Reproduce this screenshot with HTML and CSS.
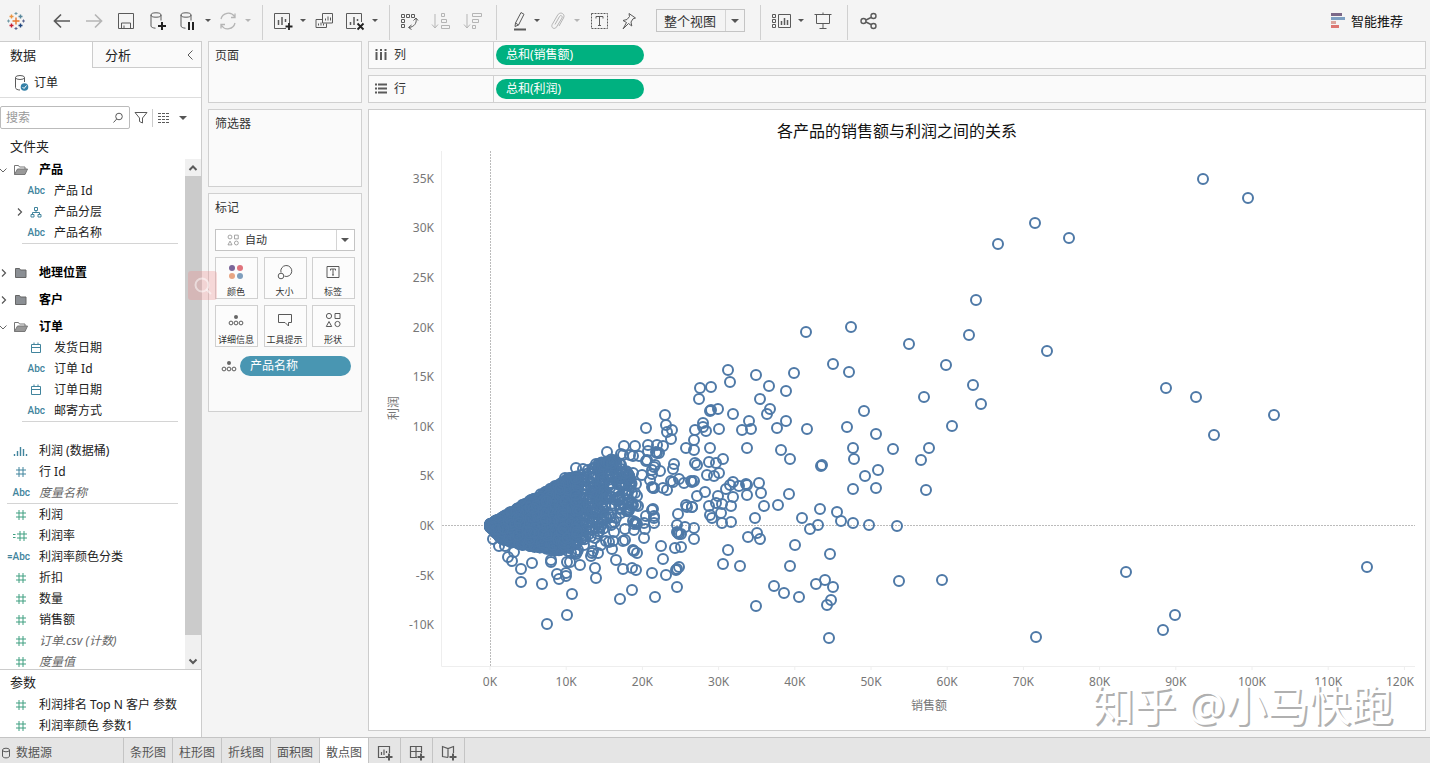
FILE: index.html
```html
<!DOCTYPE html>
<html lang="zh-CN">
<head>
<meta charset="utf-8">
<title>各产品的销售额与利润之间的关系</title>
<link rel="stylesheet" href="styles.css">
</head>
<body>
<svg class="symbols" aria-hidden="true">
  <symbol id="hash" viewBox="0 0 16 16"><path d="M6 3v10M10 3v10M3 6h10M3 10h10"/></symbol>
  <symbol id="calc-hash" viewBox="0 0 16 16"><path d="M7 3v10M11 3v10M4 6h10M4 10h10M0 6.500h2.500M0 9.500h2.500"/></symbol>
  <symbol id="date" viewBox="0 0 16 16"><path d="M3.500 4.500h9v8h-9zM3.500 7.500h9M6 2.500v2M10 2.500v2"/></symbol>
  <symbol id="tree" viewBox="0 0 16 16"><path d="M6.500 3.500h3v3h-3zM3 10.500h3v2.500H3zM10 10.500h3v2.500h-3zM8 6.500v2M4.500 10.500v-2h7v2"/></symbol>
  <symbol id="bins" viewBox="0 0 16 16"><path d="M1.500 11v2M4.500 8v5M7.500 4v9M10.500 6v7M13.500 11v2" stroke-width="1.400"/></symbol>
  <symbol id="folder" viewBox="0 0 16 16"><path d="M2.500 12.500v-9h4l1 1.500h5.500v7.500z" fill="#8b8f94" stroke="#666"/></symbol>
  <symbol id="folder-open" viewBox="0 0 16 16"><path d="M1.500 12.500v-9h4l1 1.500h5.500v2" fill="none" stroke="#777"/><path d="M1.500 12.500l3-5.500h10l-2.500 5.500z" fill="#999" stroke="#777"/></symbol>
  <symbol id="down" viewBox="0 0 10 10"><path d="M1.500 3.500L5 7l3.500-3.500" stroke="#666" fill="none"/></symbol>
  <symbol id="right" viewBox="0 0 10 10"><path d="M4 1.500L7.500 5L4 8.500" stroke="#555" stroke-width="1.200" fill="none"/></symbol>
  <symbol id="detail" viewBox="0 0 16 16"><circle cx="8" cy="5" r="2" fill="#666" stroke="none"/><circle cx="3" cy="11" r="1.900"/><circle cx="8" cy="11" r="1.900"/><circle cx="13" cy="11" r="1.900"/></symbol>
  <symbol id="shapes" viewBox="0 0 16 16"><circle cx="4" cy="4" r="2.600"/><path d="M10 1.500h5v5h-5zM4 9.500l2.700 5H1.300z"/><circle cx="12.500" cy="12" r="2.600"/></symbol>
</svg>

<header class="toolbar">
  <button class="tool first" aria-label="开始"><svg class="ico" viewBox="0 0 20 20"><g fill="none" stroke-width="1.400"><path d="M10 6.500v7M6.500 10h7" stroke="#e8762d"/><path d="M5.500 3.500v4M3.500 5.500h4" stroke="#eb9440"/><path d="M14.500 3.500v4M12.500 5.500h4" stroke="#59879b"/><path d="M5.500 12.500v4M3.500 14.500h4" stroke="#c72035"/><path d="M14.500 12.500v4M12.500 14.500h4" stroke="#1f457e"/></g><g fill="none"><path d="M10 1v3M8.500 2.500h3M1 10h3M2.500 8.500v3" stroke="#7199a6"/><path d="M10 16v3M8.500 17.500h3M16 10h3M17.500 8.500v3" stroke="#5b6591"/></g></svg></button>
  <span class="sep"></span>
  <button class="tool" aria-label="撤消"><svg class="ico" viewBox="0 0 20 20"><path d="M18 10H3M9 3.500L2.500 10L9 16.500" stroke-width="1.700"/></svg></button>
  <button class="tool off" aria-label="重做"><svg class="ico" viewBox="0 0 20 20"><path d="M2 10h15M11 3.500L17.500 10L11 16.500" stroke-width="1.700"/></svg></button>
  <button class="tool" aria-label="保存"><svg class="ico" viewBox="0 0 20 20"><path d="M2.500 2.500h15v15h-15zM5.500 17v-5h9v5M8 17v-2.500"/></svg></button>
  <button class="tool" aria-label="新建数据源"><svg class="ico" viewBox="0 0 20 20"><ellipse cx="8" cy="4" rx="5" ry="2.200"/><path d="M3 4v11c0 1.200 2 2 4.500 2.200M13 4v5.500"/><path d="M14 11v8M10 15h8" stroke="#222" stroke-width="2"/></svg></button>
  <button class="tool menu" aria-label="暂停自动更新"><svg class="ico" viewBox="0 0 20 20"><ellipse cx="8" cy="4" rx="5" ry="2.200"/><path d="M3 4v11c0 1.200 2 2 4.500 2.200M13 4v5.500"/><path d="M11 11v8M15 11v8" stroke="#222" stroke-width="2"/></svg></button>
  <button class="caret" aria-label="更新选项"></button>
  <button class="tool menu off" aria-label="运行更新"><svg class="ico" viewBox="0 0 20 20"><path d="M3 8a7.500 7.500 0 0 1 13.500-2.500M17 12a7.500 7.500 0 0 1-13.500 2.500M13 6.500h4v-4M7 13.500H3v4" stroke-width="1.300"/></svg></button>
  <button class="caret off" aria-label="运行选项"></button>
  <span class="sep"></span>
  <button class="tool menu" aria-label="新建工作表"><svg class="ico" viewBox="0 0 20 20"><path d="M13 17.500H1.500v-15h15V12"/><path d="M5.500 14V9M9 14V6M12.500 11V8" stroke-width="1.500"/><path d="M16 12v7M12.500 15.500h7" stroke="#222" stroke-width="1.800"/></svg></button>
  <button class="caret" aria-label="工作表选项"></button>
  <button class="tool" aria-label="复制"><svg class="ico" viewBox="0 0 20 20"><path d="M7.500 2.500h10v9.500h-10zM7 8.500H1v8h10.500v-4M10.500 9.500v-2M13 9.500v-4M15.500 9.500v-3M3.500 14.500v-2M6 14.500v-3M8.500 14.500v-2"/></svg></button>
  <button class="tool menu" aria-label="清除工作表"><svg class="ico" viewBox="0 0 20 20"><path d="M11 17.500H1.500v-15h15V11"/><path d="M5.500 14v-3M9 14V6M12.500 10V8" stroke-width="1.500"/><path d="M12.500 12.500l6 6M18.500 12.500l-6 6" stroke="#222" stroke-width="1.800"/></svg></button>
  <button class="caret" aria-label="清除选项"></button>
  <span class="sep"></span>
  <button class="tool menu" aria-label="交换行和列"><svg class="ico" viewBox="0 0 20 20"><path d="M1.500 3.500h3v3h-3zM6.500 3.500h3v3h-3zM11.500 3.500h3v3h-3zM1.500 8.500h3v3h-3zM1.500 13.500h3v3h-3zM16 8c1 4-2 8-7 8.500M13.500 9.500L16 7l2 2.500M11.500 14L8.500 16.500l3 2"/></svg></button>
  <button class="tool off" aria-label="升序排序"><svg class="ico" viewBox="0 0 20 20"><path d="M5 3v13M2 13.500L5 17l3-3.500M11.500 2.500h3v3h-3zM11.500 8.500h5v3h-5zM11.500 14.500h8v3h-8z"/></svg></button>
  <button class="tool off" aria-label="降序排序"><svg class="ico" viewBox="0 0 20 20"><path d="M5 3v13M2 13.500L5 17l3-3.500M10.500 2.500h9v3h-9zM10.500 8.500h6v3h-6zM10.500 14.500h3v3h-3z"/></svg></button>
  <span class="sep"></span>
  <button class="tool menu" aria-label="突出显示"><svg class="ico" viewBox="0 0 20 20"><path d="M8.500 12L14 1.500l3 1.800L11.500 14L8 15.500zM8.500 12l3 2"/><path d="M7 18.500h12" stroke-width="2"/></svg></button>
  <button class="caret" aria-label="突出显示选项"></button>
  <button class="tool menu off" aria-label="组成员"><svg class="ico" viewBox="0 0 20 20"><path d="M8 13.500l4.500-8c1-2 3.500-.5 2.500 1.500L9.500 16c-1.800 3-6 .8-4.300-2.500l5.500-9.500c2.500-4 8-1 5.800 3L12 15"/></svg></button>
  <button class="caret off" aria-label="组选项"></button>
  <button class="tool" aria-label="显示标记标签"><svg class="ico" viewBox="0 0 20 20"><path d="M2.500 2.500h16v15h-16z" stroke-dasharray="2 1"/><path d="M7 7.500v-2h7v2M10.500 5.500v9M9 14.500h3"/></svg></button>
  <button class="tool menu" aria-label="固定轴"><svg class="ico" viewBox="0 0 20 20"><path d="M10 2.500l6.500 4.500-2.500.8-2 3.200.8 4-3.300-2.500L4 18l3.500-6.500L4 9.500l4-1 2.500-3z"/></svg></button>
  <label class="select fit"><select aria-label="适合"><option>整个视图</option></select></label>
  <span class="sep"></span>
  <button class="tool menu" aria-label="显示卡"><svg class="ico wide" viewBox="0 0 22 20"><path d="M8.500 3.500h12v13h-12zM2.500 3.500h3v3h-3zM2.500 8.500h3v3h-3zM2.500 13.500h3v3h-3z"/><path d="M11.500 14v-4M14.500 14V7M17.500 14V9" stroke-width="1.500"/></svg></button>
  <button class="caret" aria-label="显示卡选项"></button>
  <button class="tool" aria-label="演示模式"><svg class="ico" viewBox="0 0 20 20"><path d="M1.500 3.500h17M3.500 3.500v9h13v-9M10 12.500v5M6.500 17.500h7M10 1.500v2"/></svg></button>
  <span class="sep"></span>
  <button class="tool menu" aria-label="共享"><svg class="ico" viewBox="0 0 20 20"><g stroke-width="1.400"><circle cx="5.500" cy="10" r="2.500"/><circle cx="15.500" cy="5" r="2.500"/><circle cx="15.500" cy="15" r="2.500"/><path d="M8 9L13 6.500M8 11l5 2.500"/></g></svg></button>
  <button class="showme"><svg viewBox="0 0 14 16"><path fill="#7b6888" d="M0 0h11v3H0z"/><path fill="#7d9fc2" d="M0 4h14v3H0z"/><path fill="#dba59d" d="M0 8h5v3H0z"/><path fill="#dd7671" d="M0 12h8v3H0z"/></svg>智能推荐</button>
</header>

<main class="work">
  <aside class="data">
    <div class="tabs"><button class="active">数据</button><button>分析<svg viewBox="0 0 10 12"><path d="M6.500 1.500L2 6l4.500 4.500"/></svg></button></div>
    <div class="source"><svg class="ico" viewBox="0 0 20 20"><ellipse cx="9" cy="4.500" rx="4.500" ry="2"/><path d="M4.500 4.500v10c0 1.500 2 2.500 4.500 2.500M13.500 4.500V9"/><circle cx="13.500" cy="14" r="3.800" fill="#3581a8" stroke="none"/><path d="M11.500 14l1.500 1.500 2.500-3" stroke="#fff"/></svg>订单</div>
    <div class="find">
      <label class="search"><input type="text" placeholder="搜索" aria-label="搜索"><svg viewBox="0 0 12 12"><circle cx="7" cy="4.500" r="3.300"/><path d="M4.700 7L1.500 10.500"/></svg></label>
      <button aria-label="筛选"><svg viewBox="0 0 14 14"><path d="M1 1.500h12L8.500 7v5l-3-1.500V7z"/></svg></button>
      <span class="bar"></span>
      <button class="view" aria-label="视图"><svg viewBox="0 0 14 12"><path d="M1 1.500h12M1 4.500h12M1 7.500h12M1 10.500h12" stroke-dasharray="3 1" stroke-width="1.200"/></svg><i class="tri"></i></button>
    </div>
    <h2>文件夹</h2>
    <div class="fields">
      <ul class="list">
        <li class="folder"><svg class="arrow"><use href="#down"/></svg><svg class="fi"><use href="#folder-open"/></svg>产品</li>
        <li class="child"><b class="abc">Abc</b>产品 Id</li>
        <li class="child"><svg class="arrow inner"><use href="#right"/></svg><svg class="fi"><use href="#tree"/></svg>产品分层</li>
        <li class="child"><b class="abc">Abc</b>产品名称</li>
        <li class="rule inset"></li>
        <li class="folder closed"><svg class="arrow"><use href="#right"/></svg><svg class="fi"><use href="#folder"/></svg>地理位置</li>
        <li class="folder closed"><svg class="arrow"><use href="#right"/></svg><svg class="fi"><use href="#folder"/></svg>客户</li>
        <li class="folder after"><svg class="arrow"><use href="#down"/></svg><svg class="fi"><use href="#folder-open"/></svg>订单</li>
        <li class="child"><svg class="fi"><use href="#date"/></svg>发货日期</li>
        <li class="child"><b class="abc">Abc</b>订单 Id</li>
        <li class="child"><svg class="fi"><use href="#date"/></svg>订单日期</li>
        <li class="child"><b class="abc">Abc</b>邮寄方式</li>
        <li class="rule inset last"></li>
        <li><svg class="fi"><use href="#bins"/></svg>利润 (数据桶)</li>
        <li><svg class="fi"><use href="#hash"/></svg>行 Id</li>
        <li class="auto"><b class="abc">Abc</b>度量名称</li>
        <li class="rule"></li>
        <li class="measure"><svg class="fi"><use href="#hash"/></svg>利润</li>
        <li class="measure"><svg class="fi"><use href="#calc-hash"/></svg>利润率</li>
        <li><b class="abc">=Abc</b>利润率颜色分类</li>
        <li class="measure"><svg class="fi"><use href="#hash"/></svg>折扣</li>
        <li class="measure"><svg class="fi"><use href="#hash"/></svg>数量</li>
        <li class="measure"><svg class="fi"><use href="#hash"/></svg>销售额</li>
        <li class="measure auto"><svg class="fi"><use href="#hash"/></svg>订单.csv (计数)</li>
        <li class="measure auto"><svg class="fi"><use href="#hash"/></svg>度量值</li>
      </ul>
      <div class="scroll"><button aria-label="向上"><svg viewBox="0 0 10 10"><path d="M1.500 7L5 3.500 8.500 7"/></svg></button><span></span><button aria-label="向下"><svg viewBox="0 0 10 10"><path d="M1.500 3.500L5 7l3.500-3.500"/></svg></button></div>
    </div>
    <div class="params">
      <h2>参数</h2>
      <ul class="list">
        <li class="measure"><svg class="fi"><use href="#hash"/></svg>利润排名 Top N 客户 参数</li>
        <li class="measure"><svg class="fi"><use href="#hash"/></svg>利润率颜色 参数1</li>
      </ul>
    </div>
    <span class="finder"><svg viewBox="0 0 20 20"><circle cx="9" cy="9" r="6.500"/><path d="M13.500 13.500L18 18"/></svg></span>
  </aside>

  <section class="cards">
    <div class="card pages"><h3>页面</h3></div>
    <div class="card filters"><h3>筛选器</h3></div>
    <div class="card marks">
      <h3>标记</h3>
      <label class="select type"><svg><use href="#shapes"/></svg><select aria-label="标记类型"><option>自动</option></select></label>
      <div class="grid">
        <button><svg viewBox="0 0 16 16"><g stroke="none"><circle cx="4" cy="4" r="3" fill="#7b6699"/><circle cx="12" cy="4" r="3" fill="#e0737c"/><circle cx="4" cy="12" r="3" fill="#e8a583"/><circle cx="12" cy="12" r="3" fill="#7f9fbd"/></g></svg>颜色</button>
        <button><svg viewBox="0 0 16 16"><path d="M4 8.500A5.500 5.500 0 1 1 7.500 12.200"/><circle cx="4" cy="12" r="2.800"/></svg>大小</button>
        <button><svg viewBox="0 0 16 16"><path d="M2 2.500h12v11H2zM5.500 6.500V5h5v1.500M8 5v6M7 11h2"/></svg>标签</button>
        <button><svg><use href="#detail"/></svg>详细信息</button>
        <button><svg viewBox="0 0 16 16"><path d="M1.500 2.500h13v8h-3v3.500l-3.500-3.500H1.500z"/></svg>工具提示</button>
        <button><svg><use href="#shapes"/></svg>形状</button>
      </div>
      <div class="encoding"><svg><use href="#detail"/></svg><span class="pill blue">产品名称</span></div>
    </div>
  </section>

  <section class="sheet">
    <div class="shelf"><div class="name"><svg viewBox="0 0 14 14"><path d="M2.500 4v8M7 4v8M11.500 4v8M2.500 1v2M7 1v2M11.500 1v2"/></svg>列</div><span class="pill green">总和(销售额)</span></div>
    <div class="shelf"><div class="name"><svg viewBox="0 0 14 14"><path d="M4 2.500h9M4 6.500h9M4 10.500h9M1 2.500h2M1 6.500h2M1 10.500h2"/></svg>行</div><span class="pill green">总和(利润)</span></div>
    <div class="viz">
      <h1>各产品的销售额与利润之间的关系</h1>
      <svg id="chart" viewBox="369 147 1056 583" role="img" aria-label="散点图"></svg>
      <div class="mark">知乎 @小马快跑</div>
    </div>
  </section>
</main>

<footer class="sheets">
  <button class="ds"><svg viewBox="0 0 10 12"><ellipse cx="5" cy="3" rx="3.500" ry="1.800"/><path d="M1.500 3v6c0 2.500 7 2.500 7 0V3"/></svg>数据源</button>
  <button>条形图</button><button>柱形图</button><button>折线图</button><button>面积图</button><button class="active">散点图</button>
  <button class="new" aria-label="新建工作表"><svg viewBox="0 0 18 18"><path d="M9 13.500H2.500v-11h11V9M5.500 11V8M8 11V5.500M10.500 9V7"/><path d="M13 9.500v7M9.500 13h7" stroke-width="2"/></svg></button>
  <button class="new" aria-label="新建仪表板"><svg viewBox="0 0 18 18"><path d="M9 13.500H2.500v-11h11V9M2.500 7.500h11M8 2.500v11"/><path d="M13 9.500v7M9.500 13h7" stroke-width="2"/></svg></button>
  <button class="new" aria-label="新建故事"><svg viewBox="0 0 18 18"><path d="M8 13.500l-5.500-1v-10L8 4.500l5.500-2V9M8 4.500v9"/><path d="M13 9.500v7M9.500 13h7" stroke-width="2"/></svg></button>
</footer>
<script src="chart.js"></script>
</body>
</html>
```

FILE: styles.css
```css
* { box-sizing: border-box; }
body {
  margin: 0; height: 100vh; display: flex; flex-direction: column; overflow: hidden;
  background: #f4f4f4; color: #333;
  font: 12px/20px "Noto Sans", "Noto Sans CJK SC", sans-serif;
}
button, input, select { font: inherit; color: inherit; border: 0; background: none; padding: 0; margin: 0; border-radius: 0; }
h1, h2, h3, ul { margin: 0; padding: 0; font-weight: 400; list-style: none; }
svg { fill: none; stroke: #5a5a5a; flex: none; }
.symbols { position: absolute; width: 0; height: 0; }
.ico { width: 20px; height: 20px; }
.ico.wide { width: 22px; }

.toolbar { flex: none; height: 41px; display: flex; align-items: center; }
.tool { width: 32px; height: 32px; flex: none; display: flex; align-items: center; justify-content: center; }
.tool.first { width: 31px; }
.tool.menu { width: 28px; }
.off svg { stroke: #b5b5b5; }
.caret { width: 12px; height: 32px; flex: none; display: flex; align-items: center; justify-content: center; }
.caret::after, .select::after, .tri { content: ""; border: 3px solid transparent; border-top-color: #555; border-bottom: 0; }
.caret.off::after { border-top-color: #b5b5b5; }
.sep { width: 1px; height: 35px; flex: none; background: #d0d0d0; margin: 3px 6px 0 8px; }
.select { display: flex; align-items: center; border: 1px solid #c4c4c4; position: relative; }
.select select { appearance: none; flex: 1; width: 100%; height: 100%; }
.select::after { position: absolute; right: 5px; border-width: 4px; border-bottom: 0; }
.fit { width: 89px; height: 23px; margin: 0 7px 0 13px; background: linear-gradient(#d4d4d4, #d4d4d4) right 18px top / 1px 100% no-repeat; }
.fit select { font-size: 13px; padding-left: 7px; }
.showme { margin-left: auto; margin-right: 27px; display: flex; align-items: center; gap: 6px; font-size: 13px; color: #111; }
.showme svg { width: 14px; height: 16px; stroke: none; }

.work { flex: 1; min-height: 0; display: flex; }
.data { width: 202px; flex: none; background: #fff; border-right: 1px solid #ccc; display: flex; flex-direction: column; position: relative; color: #222; }
.tabs { display: flex; height: 27px; flex: none; font-size: 13px; border-top: 1px solid #ccc; }
.tabs button { flex: 1; display: flex; align-items: center; justify-content: space-between; padding: 0 5px 0 12px; background: #fafafa; border: solid #ccc; border-width: 0 0 1px 1px; }
.tabs .active { flex: none; width: 92px; background: #fff; border-color: transparent; padding-left: 9px; }
.tabs svg { width: 10px; height: 12px; }
.source { height: 30px; flex: none; display: flex; align-items: center; gap: 3px; padding-left: 11px; border-bottom: 1px solid #ddd; }
.find { height: 39px; flex: none; display: flex; align-items: center; gap: 4px; }
.find svg { width: 14px; height: 14px; display: block; }
.find .search { width: 130px; height: 23px; border: 1px solid #bbb; border-radius: 2px; display: flex; align-items: center; padding: 0 5px; }
.search input { min-width: 0; flex: 1; outline: 0; }
.search input::placeholder { color: #999; }
.find .search svg { width: 12px; height: 12px; }
.bar { width: 1px; height: 18px; background: #ccc; }
.view { display: flex; align-items: center; gap: 8px; }
.tri { border-width: 4px; border-bottom: 0; }
.data h2 { font-size: 13px; padding-left: 10px; }
.data > h2 { flex: none; height: 22px; line-height: 18px; }
.fields { flex: 1; min-height: 0; display: flex; overflow: hidden; border-bottom: 1px solid #ccc; }
.fields .list { flex: 1; min-width: 0; }
.list li { height: 21px; display: flex; align-items: center; padding-left: 13px; position: relative; white-space: nowrap; }
.list .folder { font-weight: 700; color: #000; }
.list .closed { height: 27px; }
.list .after { height: 24px; padding-top: 3px; }
.list .child { padding-left: 28px; }
.list .rule { height: 1px; margin: 0 7px; background: #d4d4d4; padding: 0; }
.list .inset { margin: 0 7px 15px 22px; }
.list .last { margin-bottom: 18px; }
.list .auto { font-style: italic; color: #666; }
.fi { width: 16px; height: 16px; margin-right: 10px; stroke: #41849d; }
.abc { width: 17px; margin-right: 9px; font: 500 10px/16px Roboto, sans-serif; color: #41849d; display: flex; justify-content: flex-end; }
.measure .fi { stroke: #3f9f80; }
.arrow { position: absolute; left: -2px; width: 10px; height: 10px; }
.arrow.inner { left: 14px; }
.scroll { width: 16px; flex: none; display: flex; flex-direction: column; background: #f0f0f0; }
.scroll button { height: 17px; display: flex; align-items: center; justify-content: center; }
.scroll button:last-child { margin-top: auto; }
.scroll span { flex: 0 1 459px; background: #cbcbcb; }
.scroll svg { width: 10px; height: 10px; stroke-width: 2; }
.params { flex: none; padding-bottom: 1px; }
.params h2 { height: 24px; line-height: 24px; }
.finder { position: absolute; left: 188px; top: 230px; width: 29px; height: 29px; border-radius: 3px; background: rgba(238, 140, 140, .3); padding: 5px; z-index: 2; }
.finder svg { width: 20px; height: 20px; stroke: rgba(255, 255, 255, .5); stroke-width: 2; display: block; }

.cards { width: 154px; flex: none; margin: 0 6px; display: flex; flex-direction: column; gap: 6px; }
.card { border: 1px solid #d0d0d0; background: #fafafa; padding: 4px 6px; }
.card h3 { font-size: 12px; }
.pages { height: 62px; }
.filters { height: 78px; }
.marks { height: 219px; }
.type { height: 22px; margin-top: 11px; background: #fff linear-gradient(#d4d4d4, #d4d4d4) right 17px top / 1px 100% no-repeat; }
.type svg { width: 12px; height: 12px; margin: 0 6px 0 11px; stroke: #888; }
.type select { font-size: 11px; }
.grid { display: grid; grid-template-columns: repeat(3, 43px); justify-content: space-between; gap: 6px 0; margin-top: 6px; }
.grid button { height: 42px; border: 1px solid #d0d0d0; display: flex; flex-direction: column; align-items: center; justify-content: space-between; padding: 6px 1px 0 0; font-size: 9px; line-height: 13px; background: #fcfcfc; white-space: nowrap; }
.grid svg, .encoding svg { width: 16px; height: 16px; }
.encoding { display: flex; align-items: center; gap: 3px; margin-top: 9px; padding: 0 4px 0 6px; }
.pill { height: 20px; border-radius: 10px; color: #fff; padding-left: 10px; line-height: 19px; }
.blue { background: #4996b2; flex: 1; }
.green { background: #00b180; width: 148px; }

.sheet { flex: 1; min-width: 0; display: flex; flex-direction: column; gap: 6px; padding: 0 4px 6px 0; }
.shelf { height: 28px; flex: none; display: flex; align-items: center; gap: 2px; border: 1px solid #d0d0d0; background: #fafafa; }
.name { width: 125px; height: 100%; border-right: 1px solid #d0d0d0; display: flex; align-items: center; gap: 6px; padding-left: 5px; }
.name svg { width: 14px; height: 14px; stroke-width: 2; }
.viz { flex: 1; min-height: 0; display: flex; flex-direction: column; border: 1px solid #ccc; background: #fff; position: relative; }
.viz h1 { font-size: 16px; line-height: 24px; padding: 9px 0 4px; text-align: center; color: #111; }
#chart { flex: 1; min-height: 0; width: 100%; }
#chart text { fill: #777; stroke: none; font-size: 12px; }
.dot { stroke: #4e79a7; stroke-width: 2; }
.axis { stroke: #eee; }
.zero { stroke: #bbb; stroke-dasharray: 2 1; }
.mark { position: absolute; right: 32px; bottom: 0; font-size: 42px; line-height: 50px; color: #fff; text-shadow: 2px 2px 0 #b0b0b0; white-space: pre; }

.sheets { flex: none; height: 26px; display: flex; background: #e5e5e5; border-top: 1px solid #c4c4c4; color: #555; }
.sheets button { width: 49px; border-right: 1px solid #c4c4c4; display: flex; align-items: center; justify-content: center; padding-top: 4px; }
.sheets .ds { width: 124px; justify-content: flex-start; gap: 5px; padding-left: 1px; }
.ds svg { width: 10px; height: 12px; }
.sheets .active { background: #fff; }
.sheets .new { width: 32px; }
.new svg { width: 18px; height: 18px; stroke-width: 1.200; }
```

FILE: chart.js
```js
// Marks as x,y pairs in the drawing units of the chart.
const marks = `
1203,179 1248,198 1035,223 1069,238 998,244 976,300 969,335 1047,351 946,365 973,385 981,404 952,426
924,397 909,344 851,327 806,332 1166,388 1196,397 1214,435 1274,415 1126,572 1367,567 1175,615 1163,630
1036,637 942,580 899,581 897,526 869,525 926,490 921,460 929,448 728,370 730,382 756,375 794,373 700,388
711,387 699,399 769,386 786,391 760,399 711,410 710,411 718,409 733,414 770,409 767,414 749,421 742,430
751,429 777,428 786,421 807,429 833,364 849,372 864,411 847,427 876,434 893,449 853,448 854,459 878,470
865,476 853,489 876,488 703,423 695,430 703,427 706,431 719,429 694,440 694,450 710,448 747,448 781,450
790,459 822,465 821,466 695,463 697,465 709,462 716,463 723,459 707,475 714,476 719,473 691,481 694,481
733,482 730,485 739,486 746,484 747,485 759,483 761,493 747,495 726,489 733,497 705,492 697,496 718,496
709,506 716,503 722,504 731,506 692,507 710,515 712,518 721,513 722,523 731,522 694,528 694,539 755,518
764,506 778,505 789,494 820,509 802,518 810,529 818,525 837,512 841,521 853,523 748,537 757,533 760,539
795,545 830,554 728,550 723,564 740,566 790,566 774,586 784,593 799,597 816,584 825,580 833,587 831,600
827,605 756,606 829,638 665,415 666,425 667,432 672,430 671,439 646,428 607,452 624,446 635,446 648,445
657,445 663,446 621,454 623,455 630,455 633,456 639,456 647,460 646,461 648,451 657,453 659,453 656,452
686,448 674,464 673,469 655,465 652,470 654,467 660,471 652,474 650,480 653,488 654,488 652,487 663,488
667,490 671,481 673,482 679,479 684,483 692,482 642,475 636,484 633,473 686,505 687,507 692,507 678,514
653,509 652,510 654,516 654,523 654,518 646,516 645,529 644,538 677,525 685,527 678,533 681,534 679,534
677,532 675,548 681,547 661,546 663,559 633,550 637,553 634,551 625,540 623,541 616,560 623,569 632,568
636,570 652,573 666,575 676,570 679,567 677,569 677,587 620,599 632,590 655,597 572,594 567,615 547,624
542,584 521,582 521,569 532,563 512,561 508,557 514,552 551,562 551,560 557,574 559,579 566,576 566,573
567,562 570,562 580,565 595,568 596,578 592,553 593,551 598,553 591,556 601,545 609,542 612,549 614,532
595,538 635,522 636,523 633,521 637,524 634,524 644,523 625,529 634,530 620,509 616,518 632,503 638,506
635,493 637,496 636,505 633,505 493,539 499,546 505,546 576,468 583,469 588,470 596,464 565,478 569,478
568,551 571,553 576,554 577,552 575,552 578,550 569,548 584,545 613,541 606,541`.trim().split(/\s+/).map(p => p.split(',').map(Number));

// Upper and lower outline of the crowded wedge near the origin.
const upper = [[490, 524], [541, 494], [567, 479], [585, 474], [600, 463], [612, 459], [622, 464], [632, 480]];
const lower = [[490, 527], [502, 540], [530, 547], [558, 551], [575, 545], [590, 538], [612, 526], [632, 508]];

function edge(line, x) {
  for (let i = 1; i < line.length; i++) {
    const [x0, y0] = line[i - 1], [x1, y1] = line[i];
    if (x <= x1) return y0 + (y1 - y0) * (x - x0) / (x1 - x0);
  }
  return line[line.length - 1][1];
}

let seed = 7;
function random() {
  seed = (seed * 16807) % 2147483647;
  return seed / 2147483647;
}

function fill(count, from, to, bias) {
  for (let i = 0; i < count; i++) {
    const x = from + (to - from) * random();
    const top = edge(upper, x), bottom = edge(lower, x);
    marks.push([x, top + (bottom - top) * Math.pow(random(), bias)]);
  }
}
fill(1300, 490, 560, 1);
fill(230, 558, 578, 1.1);
fill(165, 575, 605, 1.2);
fill(110, 600, 632, 1.6);

const parts = [];
parts.push('<path class="axis" d="M441.5 151V666.5H1415"/>');
parts.push('<path class="zero" d="M490.5 151V666M442 525.5H1415"/>');
for (let k = 0; k <= 120; k += 10) {
  const x = 490 + k * 7.62;
  parts.push(`<path class="axis" d="M${x} 666v4"/>`);
  parts.push(`<text x="${k === 120 ? 1400 : x}" y="686" text-anchor="middle">${k}K</text>`);
}
for (let k = -10; k <= 35; k += 5) {
  parts.push(`<text x="434" y="${530 - k * 9.92}" text-anchor="end">${k}K</text>`);
}
parts.push('<text x="929" y="710" text-anchor="middle">销售额</text>');
parts.push('<text transform="translate(398 408) rotate(-90)" text-anchor="middle">利润</text>');
for (const [x, y] of marks) {
  parts.push(`<circle class="dot" cx="${x}" cy="${y}" r="5"/>`);
}
document.getElementById('chart').innerHTML = parts.join('');
```
